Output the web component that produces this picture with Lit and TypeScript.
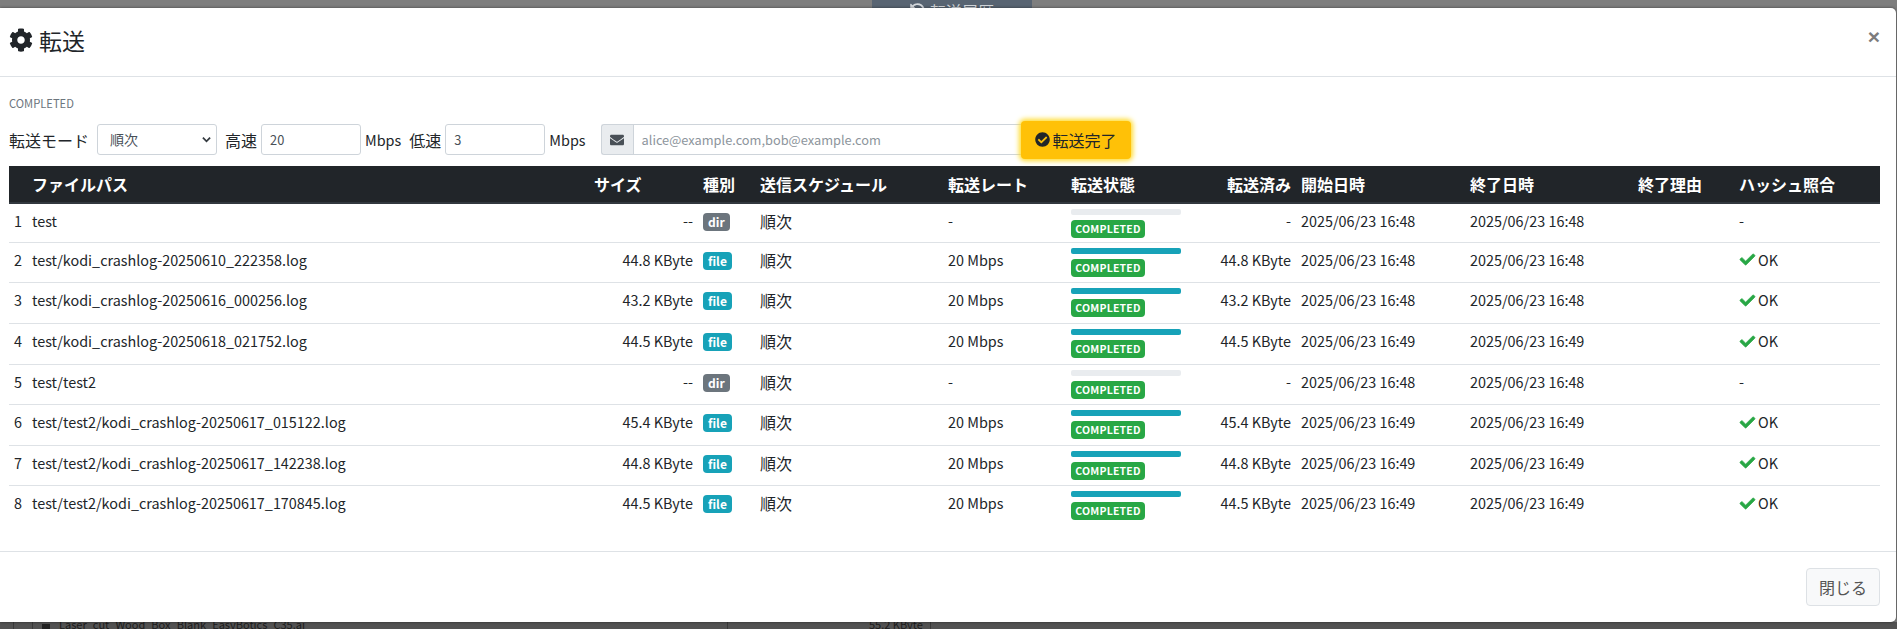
import { LitElement, html, css, svg } from "lit";
import { customElement } from "lit/decorators.js";

const rows = [
  { p: "test", s: "--", k: "dir", r: "-", d: "-", st: "16:48", en: "16:48", ok: false },
  { p: "test/kodi_crashlog-20250610_222358.log", s: "44.8 KByte", k: "file", r: "20 Mbps", d: "44.8 KByte", st: "16:48", en: "16:48", ok: true },
  { p: "test/kodi_crashlog-20250616_000256.log", s: "43.2 KByte", k: "file", r: "20 Mbps", d: "43.2 KByte", st: "16:48", en: "16:48", ok: true },
  { p: "test/kodi_crashlog-20250618_021752.log", s: "44.5 KByte", k: "file", r: "20 Mbps", d: "44.5 KByte", st: "16:49", en: "16:49", ok: true },
  { p: "test/test2", s: "--", k: "dir", r: "-", d: "-", st: "16:48", en: "16:48", ok: false },
  { p: "test/test2/kodi_crashlog-20250617_015122.log", s: "45.4 KByte", k: "file", r: "20 Mbps", d: "45.4 KByte", st: "16:49", en: "16:49", ok: true },
  { p: "test/test2/kodi_crashlog-20250617_142238.log", s: "44.8 KByte", k: "file", r: "20 Mbps", d: "44.8 KByte", st: "16:49", en: "16:49", ok: true },
  { p: "test/test2/kodi_crashlog-20250617_170845.log", s: "44.5 KByte", k: "file", r: "20 Mbps", d: "44.5 KByte", st: "16:49", en: "16:49", ok: true },
];

const cols = [18, 562, 109, 57, 188, 123, 120, 110, 169, 168, 101, 146];

const gear = svg`<path fill="currentColor" d="M487.4 315.7l-42.6-24.6c4.3-23.2 4.3-47 0-70.2l42.6-24.6c4.9-2.8 7.1-8.6 5.5-14-11.1-35.6-30-67.8-54.7-94.6-3.8-4.1-10-5.1-14.8-2.3L380.8 110c-17.9-15.4-38.5-27.3-60.8-35.1V25.8c0-5.6-3.9-10.5-9.4-11.7-36.7-8.2-74.3-7.8-109.2 0-5.5 1.2-9.4 6.1-9.4 11.7V75c-22.2 7.9-42.8 19.8-60.8 35.1L88.7 85.5c-4.9-2.8-11-1.9-14.8 2.3-24.7 26.7-43.6 58.9-54.7 94.6-1.7 5.4.6 11.2 5.5 14L67.3 221c-4.3 23.2-4.3 47 0 70.2l-42.6 24.6c-4.9 2.8-7.1 8.6-5.5 14 11.1 35.6 30 67.8 54.7 94.6 3.8 4.1 10 5.1 14.8 2.3l42.6-24.6c17.9 15.4 38.5 27.3 60.8 35.1v49.2c0 5.6 3.9 10.5 9.4 11.7 36.7 8.2 74.3 7.8 109.2 0 5.5-1.2 9.4-6.1 9.4-11.7v-49.2c22.2-7.9 42.8-19.8 60.8-35.1l42.6 24.6c4.9 2.8 11 1.9 14.8-2.3 24.7-26.7 43.6-58.9 54.7-94.6 1.5-5.5-.7-11.3-5.6-14.1zM256 336c-44.1 0-80-35.9-80-80s35.9-80 80-80 80 35.9 80 80-35.9 80-80 80z"/>`;
const envelope = svg`<path fill="currentColor" d="M502.3 190.8c3.9-3.1 9.7-.2 9.7 4.7V400c0 26.5-21.5 48-48 48H48c-26.5 0-48-21.5-48-48V195.6c0-5 5.7-7.8 9.7-4.7 22.4 17.4 52.1 39.5 154.1 113.6 21.1 15.4 56.7 47.8 92.2 47.6 35.7.3 72-32.8 92.3-47.6 102-74.1 131.6-96.3 154-113.7zM256 320c23.2.4 56.6-29.2 73.4-41.4 132.7-96.3 142.8-104.7 173.4-128.7 5.8-4.5 9.2-11.5 9.2-18.9v-19c0-26.5-21.5-48-48-48H48C21.5 64 0 85.5 0 112v19c0 7.4 3.4 14.3 9.2 18.9 30.6 23.9 40.7 32.4 173.4 128.7 16.8 12.2 50.2 41.8 73.4 41.4z"/>`;
const checkCircle = svg`<path fill="currentColor" d="M504 256c0 136.967-111.033 248-248 248S8 392.967 8 256 119.033 8 256 8s248 111.033 248 248zM227.314 387.314l184-184c6.248-6.248 6.248-16.379 0-22.627l-22.627-22.627c-6.248-6.249-16.379-6.249-22.628 0L216 308.118l-70.059-70.059c-6.248-6.248-16.379-6.248-22.628 0l-22.627 22.627c-6.248 6.248-6.248 16.379 0 22.627l104 104c6.249 6.249 16.379 6.249 22.628.001z"/>`;
const check = svg`<path fill="currentColor" stroke="currentColor" stroke-width="24" d="M173.898 439.404l-166.4-166.4c-9.997-9.997-9.997-26.206 0-36.204l36.203-36.204c9.997-9.998 26.207-9.998 36.204 0L192 312.69 432.095 72.596c9.997-9.997 26.207-9.997 36.204 0l36.203 36.204c9.997 9.997 9.997 26.206 0 36.204l-294.4 294.401c-9.998 9.997-26.207 9.997-36.204-.001z"/>`;
const historyIcon = svg`<path fill="currentColor" d="M504 255.5c.3 136.7-111.2 248.4-247.9 248.5-59 0-113.2-20.5-155.8-54.9-11.1-8.9-11.9-25.5-1.8-35.6l11.3-11.3c8.6-8.6 22.4-9.6 31.9-2C173.1 425.1 212.8 440 256 440c101.7 0 184-82.3 184-184 0-101.7-82.3-184-184-184-48.8 0-93.1 19-126.1 49.9l50.8 50.8c10.1 10.1 2.9 27.3-11.3 27.3H24c-8.8 0-16-7.2-16-16V38.6c0-14.3 17.2-21.4 27.3-11.3l49.4 49.4C129.2 34.1 189.6 8 256 8c136.8 0 247.7 110.8 248 247.5z"/>`;

@customElement("app-root")
export class AppRoot extends LitElement {
  static styles = css`
    :host {
      display: block;
      width: 1897px;
      height: 629px;
      overflow: hidden;
      position: relative;
      background: #7e7e7e;
      font-family: "Noto Sans CJK JP", "Noto Sans", sans-serif;
      color: #212529;
      font-size: 16px;
      line-height: 1.5;
    }
    .bd-top { height: 8px; position: relative; overflow: hidden; }
    .tab {
      position: absolute; left: 872px; top: 0; width: 160px; height: 8px;
      background: #586472; color: #d5d9dd; font-size: 16px; line-height: 8px;
      display: flex; justify-content: center; gap: 5px;
    }
    .tab span { margin-top: 7px; white-space: nowrap; height: 8px; }
    .tab svg { width: 15px; height: 15px; margin-top: 3px; flex: none; }
    .bd-bottom {
      position: absolute; left: 0; right: 0; top: 622px; height: 7px;
      background: #525252; overflow: hidden; color: #1c1c1c; font-size: 11px;
    }
    .bd-bottom .t { position: absolute; left: 59px; top: -6px; white-space: nowrap; line-height: 16px; }
    .bd-bottom .sq { position: absolute; left: 42px; top: 2px; width: 8px; height: 5px; background: #222; }
    .bd-bottom .sz { position: absolute; left: 869px; top: -6px; line-height: 16px; white-space: nowrap; }
    .bd-bottom .ln { position: absolute; top: 0; bottom: 0; width: 1px; background: #3a3a3a; }
    .modal {
      position: absolute; left: 0; top: 8px; width: 1896px; height: 614px;
      background: #fff; border-radius: 0 5px 5px 0;
      display: flex; flex-direction: column; box-sizing: border-box;
      box-shadow: 0 0 3px rgba(0, 0, 0, .5);
    }
    .head {
      height: 69px; box-sizing: border-box; border-bottom: 1px solid #dee2e6;
      padding: 0 16px 0 9px; display: flex; align-items: center; justify-content: space-between;
    }
    .title { display: flex; align-items: center; gap: 6px; font-size: 23px; line-height: 36px; margin-top: -4px; }
    .title svg { width: 24px; height: 24px; color: #212529; }
    .close { font-family: "Liberation Sans", sans-serif; font-size: 21px; font-weight: 700; color: #7c7c7c; line-height: 1; margin-top: -11px; }
    .body { flex: 1; padding: 0 16px 0 9px; display: flex; flex-direction: column; }
    .status { font-size: 11.2px; color: #6c757d; line-height: 16px; margin-top: 18px; height: 16px; }
    .ctl { display: flex; align-items: center; height: 38px; margin-top: 9.5px; font-size: 16px; white-space: nowrap; }
    .sel, .inp {
      box-sizing: border-box; height: 31px; border: 1px solid #ced4da; border-radius: 3px;
      background: #fff; color: #495057; display: flex; align-items: center;
    }
    .sel { width: 120px; margin-left: 8px; padding: 0 5px 0 12px; justify-content: space-between; font-size: 14px; }
    .sel svg { width: 9px; height: 7px; }
    .inp { width: 100px; padding: 0 8px; font-size: 12.8px; }
    .l1 { margin-left: 8px; margin-right: 4px; }
    .l2 { margin-left: 4px; font-size: 14.4px; }
    .mail { display: flex; height: 31px; margin-left: 15px; }
    .addon {
      width: 32px; box-sizing: border-box; background: #e9ecef; border: 1px solid #ced4da; border-right: 0;
      border-radius: 3px 0 0 3px; display: flex; align-items: center; justify-content: center; color: #495057;
    }
    .addon svg { width: 14px; height: 14px; }
    .ph {
      width: 388px; box-sizing: border-box; border: 1px solid #ced4da; border-right: 0; font-size: 12.8px;
      color: #8d959c; padding: 0 8px; display: flex; align-items: center;
    }
    .btn {
      width: 110px; height: 38px; box-sizing: border-box; background: #ffc107; border-radius: 4px;
      box-shadow: 0 0 5px 2px #ffdc2e;
      color: #212529; display: flex; align-items: center; justify-content: center; gap: 3px; position: relative; font-size: 16px;
    }
    .btn svg { width: 15px; height: 15px; }
    table { border-collapse: collapse; table-layout: fixed; width: 1871px; margin-top: 7.5px; font-size: 14.4px; }
    th {
      background: #212529; color: #fff; font-weight: 700; font-size: 16px; text-align: left; height: 37px;
      box-sizing: border-box; padding: 0 5px; border-bottom: 2px solid #32383e; line-height: 24px; white-space: nowrap;
    }
    td { box-sizing: border-box; padding: 5px 5px 0; vertical-align: top; line-height: 24px; white-space: nowrap; }
    tbody tr { height: 40.6px; border-bottom: 1px solid #dee2e6; }
    tbody tr:first-child { height: 39.4px; }
    tbody tr:last-child { border-bottom: 0; }
    .r { text-align: right; }
    .big { font-size: 16px; }
    .stat { padding-top: 5px; }
    .badge {
      display: inline-block; box-sizing: border-box; height: 18px; line-height: 18px; padding: 0 5px; border-radius: 4px;
      color: #fff; font-weight: 700; font-size: 12px; vertical-align: top; margin-top: 4px;
    }
    .dir { background: #6c757d; }
    .file { background: #17a2b8; }
    .bar { width: 110px; height: 6px; background: #e9ecef; border-radius: 2px; overflow: hidden; }
    .bar.on { background: #17a2b8; }
    .done { background: #28a745; margin-top: 5px; display: block; width: 74px; padding: 0; text-align: center; font-size: 10.5px; letter-spacing: .2px; }
    .ok { display: flex; align-items: center; gap: 2px; }
    .ok svg { width: 17px; height: 15px; color: #28a745; }
    .foot {
      height: 71px; box-sizing: border-box; border-top: 1px solid #dee2e6; padding: 16px; display: flex; justify-content: flex-end;
    }
    .closebtn {
      width: 74px; height: 38px; box-sizing: border-box; background: #f8f9fa; border: 1px solid #dde1e5; border-radius: 4px;
      color: #555; font-size: 16px; display: flex; align-items: center; justify-content: center;
    }
  `;

  render() {
    return html`
      <div class="bd-top">
        <div class="tab"><svg viewBox="0 0 512 512">${historyIcon}</svg><span>転送履歴</span></div>
      </div>
      <div class="bd-bottom">
        <span class="ln" style="left:13px"></span>
        <span class="ln" style="left:32px"></span>
        <span class="ln" style="left:727px"></span>
        <span class="ln" style="left:930px"></span>
        <span class="sq"></span>
        <span class="t">Laser_cut_Wood_Box_Blank_EasyBotics_C35.ai</span>
        <span class="sz">55.2 KByte</span>
      </div>
      <div class="modal">
        <div class="head">
          <div class="title"><svg viewBox="0 0 512 512">${gear}</svg><span>転送</span></div>
          <div class="close">×</div>
        </div>
        <div class="body">
          <div class="status">COMPLETED</div>
          <div class="ctl">
            <span>転送モード</span>
            <div class="sel"><span>順次</span><svg viewBox="0 0 10 7"><path d="M1 1.5l4 4 4-4" fill="none" stroke="#343a40" stroke-width="2"/></svg></div>
            <span class="l1">高速</span>
            <div class="inp">20</div>
            <span class="l2">Mbps</span>
            <span class="l1">低速</span>
            <div class="inp">3</div>
            <span class="l2">Mbps</span>
            <div class="mail">
              <div class="addon"><svg viewBox="0 0 512 512">${envelope}</svg></div>
              <div class="ph">alice@example.com,bob@example.com</div>
            </div>
            <div class="btn"><svg viewBox="0 0 512 512">${checkCircle}</svg><span>転送完了</span></div>
          </div>
          <table>
            <colgroup>${cols.map((w) => html`<col style="width:${w}px" />`)}</colgroup>
            <thead>
              <tr>
                <th></th><th>ファイルパス</th><th>サイズ</th><th>種別</th><th>送信スケジュール</th><th>転送レート</th>
                <th>転送状態</th><th class="r">転送済み</th><th>開始日時</th><th>終了日時</th><th>終了理由</th><th>ハッシュ照合</th>
              </tr>
            </thead>
            <tbody>
              ${rows.map(
                (r, i) => html`<tr>
                  <td>${i + 1}</td>
                  <td>${r.p}</td>
                  <td class="r">${r.s}</td>
                  <td><span class="badge ${r.k}">${r.k}</span></td>
                  <td class="big">順次</td>
                  <td>${r.r}</td>
                  <td class="stat"><div class="bar ${r.ok ? "on" : ""}"></div><span class="badge done">COMPLETED</span></td>
                  <td class="r">${r.d}</td>
                  <td>2025/06/23 ${r.st}</td>
                  <td>2025/06/23 ${r.en}</td>
                  <td></td>
                  <td>${r.ok ? html`<div class="ok"><svg viewBox="0 0 512 512">${check}</svg>OK</div>` : "-"}</td>
                </tr>`
              )}
            </tbody>
          </table>
        </div>
        <div class="foot"><div class="closebtn">閉じる</div></div>
      </div>
    `;
  }
}
